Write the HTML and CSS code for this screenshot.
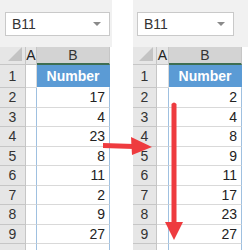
FILE: index.html
```html
<!DOCTYPE html>
<html lang="en">
<head>
    <meta charset="UTF-8">
    <title>Sort Numbers</title>
    <link rel="stylesheet" href="styles.css">
</head>
<body>

<div class="page">
    <div class="panel left">
        <div class="toolbar">
            <div class="namebox"><span>B11</span><span class="caret"></span></div>
        </div>
        <div class="sheet">
            <div class="corner"></div><div class="colhead">A</div><div class="colhead sel">B</div>
            <div class="rowhead">1</div><div class="cell"></div><div class="cell title">Number</div>
            <div class="rowhead">2</div><div class="cell"></div><div class="cell num">17</div>
            <div class="rowhead">3</div><div class="cell"></div><div class="cell num">4</div>
            <div class="rowhead">4</div><div class="cell"></div><div class="cell num">23</div>
            <div class="rowhead">5</div><div class="cell"></div><div class="cell num">8</div>
            <div class="rowhead">6</div><div class="cell"></div><div class="cell num">11</div>
            <div class="rowhead">7</div><div class="cell"></div><div class="cell num">2</div>
            <div class="rowhead">8</div><div class="cell"></div><div class="cell num">9</div>
            <div class="rowhead">9</div><div class="cell"></div><div class="cell num">27</div>
            <div class="rowhead"></div><div class="cell"></div><div class="cell num"></div>
        </div>
    </div>

    <div class="panel right">
        <div class="toolbar">
            <div class="namebox"><span>B11</span><span class="caret"></span></div>
        </div>
        <div class="sheet">
            <div class="corner"></div><div class="colhead">A</div><div class="colhead sel">B</div>
            <div class="rowhead">1</div><div class="cell"></div><div class="cell title">Number</div>
            <div class="rowhead">2</div><div class="cell"></div><div class="cell num">2</div>
            <div class="rowhead">3</div><div class="cell"></div><div class="cell num">4</div>
            <div class="rowhead">4</div><div class="cell"></div><div class="cell num">8</div>
            <div class="rowhead">5</div><div class="cell"></div><div class="cell num">9</div>
            <div class="rowhead">6</div><div class="cell"></div><div class="cell num">11</div>
            <div class="rowhead">7</div><div class="cell"></div><div class="cell num">17</div>
            <div class="rowhead">8</div><div class="cell"></div><div class="cell num">23</div>
            <div class="rowhead">9</div><div class="cell"></div><div class="cell num">27</div>
            <div class="rowhead"></div><div class="cell"></div><div class="cell num"></div>
        </div>
    </div>

    <svg class="arrows" width="248" height="250" viewBox="0 0 248 250">
        <g fill="#ee3b3f" stroke="none">
            <path d="M103 143 L134 144 L134 149 L103 148 Z"/>
            <path d="M131 137 L152 147 L132 155 Z"/>
            <path d="M171.5 104 Q174 101 176.5 104 L176.5 224 L171.5 224 Z"/>
            <path d="M165 222 L183 222 L174 240 Z"/>
        </g>
    </svg>
</div>

</body>
</html>
```

FILE: styles.css
```css
body {
    margin: 0;
    background-color: #fff;
    font-family: "Liberation Sans", Arial, sans-serif;
    color: #222;
}
.page {
    position: relative;
    display: flex;
    gap: 21px;
    width: 248px;
    height: 250px;
    overflow: hidden;
}
.panel.left {
    width: 112px;
}
.panel.right {
    flex: 1;
}
.toolbar {
    height: 47px;
    background-color: #f1f1f1;
    padding: 12px 0 0 5px;
    box-sizing: border-box;
}
.panel.right .toolbar {
    padding-left: 4px;
}
.namebox {
    display: flex;
    align-items: center;
    justify-content: space-between;
    height: 24px;
    width: 105px;
    box-sizing: border-box;
    padding: 0 8px 0 6px;
    background-color: #fff;
    border: 1px solid #c9c9c9;
    font-size: 14px;
    color: #333;
}
.panel.right .namebox {
    width: 97px;
}
.caret {
    width: 0;
    height: 0;
    border-left: 4px solid transparent;
    border-right: 4px solid transparent;
    border-top: 4px solid #8a8a8a;
}
.sheet {
    display: grid;
    grid-template-columns: 26px 11px 73px;
    grid-template-rows: 18px 23px repeat(9, 19.5px);
    font-size: 14px;
}
.panel.right .sheet {
    grid-template-columns: 24px 12px 73px;
}
.corner {
    position: relative;
    background-color: #e6e6e6;
    border-right: 1px solid #c6c6c6;
    border-bottom: 1px solid #c6c6c6;
}
.corner::after {
    content: "";
    position: absolute;
    right: 3px;
    bottom: 3px;
    border-left: 14px solid transparent;
    border-bottom: 14px solid #c3c3c3;
}
.colhead {
    background-color: #e6e6e6;
    border-right: 1px solid #c6c6c6;
    border-bottom: 1px solid #c6c6c6;
    text-align: center;
    line-height: 17px;
    color: #222;
}
.colhead.sel {
    background-color: #d3d3d3;
    border-bottom: 2px solid #3e6e52;
    color: #333;
}
.rowhead {
    background-color: #e6e6e6;
    border-right: 1px solid #c6c6c6;
    border-bottom: 1px solid #c6c6c6;
    display: flex;
    align-items: center;
    justify-content: center;
    color: #333;
}
.cell {
    border-right: 1px solid #d9d9d9;
    border-bottom: 1px solid #d9d9d9;
    box-sizing: border-box;
}
.cell.num {
    border-left: 1px solid #9fc0e0;
    border-right: 1px solid #9fc0e0;
    margin-left: -1px;
    padding-right: 4px;
    display: flex;
    align-items: center;
    justify-content: flex-end;
}
.cell.title {
    background-color: #5b9bd5;
    color: #fff;
    font-weight: bold;
    display: flex;
    align-items: center;
    justify-content: center;
    border-right: 1px solid #5b9bd5;
    border-bottom: 1px solid #fff;
}
.arrows {
    position: absolute;
    left: 0;
    top: 0;
}
```
